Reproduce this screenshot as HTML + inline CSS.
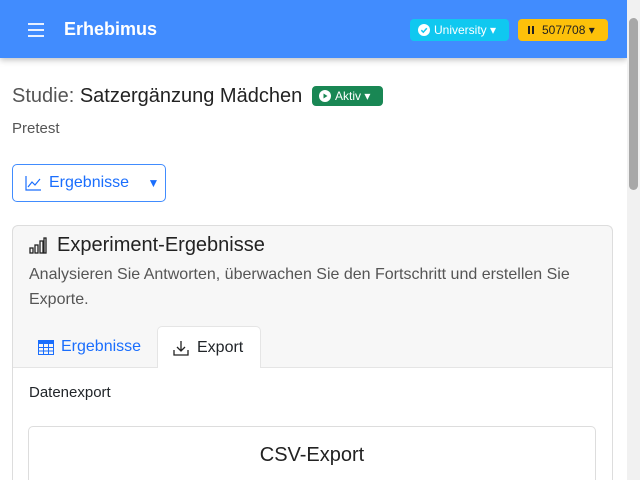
<!DOCTYPE html>
<html style="height:480px;overflow:hidden"><head><meta charset="utf-8"><style>
*{box-sizing:border-box;margin:0;padding:0}
body{width:640px;height:480px;overflow:hidden;font-family:"Liberation Sans",sans-serif;background:#fff;color:#212529;position:relative}
.nav{position:absolute;left:0;top:0;width:627px;height:58px;background:#418cfe;box-shadow:0 2px 6px rgba(0,0,0,.25)}
.brand{position:absolute;left:64px;top:19px;color:#fff;font-weight:bold;font-size:18px}
.ham{position:absolute;left:28px;top:23px;width:16px}
.ham i{display:block;height:2px;background:#e8f0ff;margin-bottom:4px}
.b1{position:absolute;left:410px;top:19px;width:99px;height:22px;background:#10c8f0;border-radius:4px;color:#fff;font-size:12px;line-height:22px;padding-left:24px}
.b2{position:absolute;left:518px;top:19px;width:90px;height:22px;background:#fdc10a;border-radius:4px;color:#222;font-size:12px;line-height:22px;padding-left:24px}
.sb{position:absolute;right:0;top:0;width:13px;height:480px;background:#f1f1f1}
.sb div{position:absolute;left:2px;top:18px;width:9px;height:172px;background:#a8a8a8;border-radius:5px}
h1{position:absolute;left:12px;top:85px;font-size:20px;font-weight:normal;color:#222}
h1 span{color:#555}
.akt{position:absolute;left:312px;top:86px;width:71px;height:20px;background:#198754;border-radius:4px;color:#fff;font-size:12px;line-height:20px;padding-left:23px}
.pre{position:absolute;left:12px;top:120px;font-size:15px;color:#555}
.btn{position:absolute;left:12px;top:164px;width:154px;height:38px;border:1px solid #418cfe;border-radius:5px;color:#1a6efd;font-size:16px;line-height:36px;padding-left:36px}
.card{position:absolute;left:12px;top:225px;width:601px;height:255px;border:1px solid #ddd;border-bottom:none;border-radius:6px 6px 0 0;background:#f7f7f7;overflow:hidden}
.ct{position:absolute;left:57px;top:234px;font-size:20px;color:#222}
.cd{position:absolute;left:29px;top:262px;width:575px;font-size:16px;line-height:25px;color:#555}
.body{position:absolute;left:13px;top:367px;width:599px;height:113px;background:#fff;border-top:1px solid #e5e5e5}
.tab1{position:absolute;left:38px;top:338px;color:#1a6efd;font-size:16px;padding-left:23px}
.tab2{position:absolute;left:157px;top:326px;width:104px;height:42px;background:#fff;border:1px solid #e5e5e5;border-bottom:none;border-radius:5px 5px 0 0;font-size:16px;line-height:42px;padding-left:39px}
.de{position:absolute;left:29px;top:384px;font-size:15px}
.csv{position:absolute;left:28px;top:426px;width:568px;height:54px;border:1px solid #ddd;border-bottom:none;border-radius:5px 5px 0 0;text-align:center;font-size:20px;padding-top:17px;color:#222}
</style></head><body>
<div class="nav">
<div class="ham"><i></i><i></i><i></i></div>
<div class="brand">Erhebimus</div>
<div class="b1"><svg style="position:absolute;left:8px;top:5px" width="12" height="12"><circle cx="6" cy="6" r="6" fill="#fff"/><path d="M3.3 6.2l2 2 3.5-4" stroke="#10c8f0" stroke-width="1.5" fill="none"/></svg>University ▾</div>
<div class="b2"><svg style="position:absolute;left:10px;top:7px" width="6" height="8"><rect x="0" y="0" width="2" height="8" fill="#222"/><rect x="4" y="0" width="2" height="8" fill="#222"/></svg>507/708 ▾</div>
</div>
<div class="sb"><div></div></div>
<h1><span>Studie:</span> Satzergänzung Mädchen</h1>
<div class="akt"><svg style="position:absolute;left:7px;top:4px" width="12" height="12"><circle cx="6" cy="6" r="6" fill="#fff"/><path d="M4.5 3.5v5l4-2.5z" fill="#198754"/></svg>Aktiv ▾</div>
<div class="pre">Pretest</div>
<div class="btn"><svg style="position:absolute;left:12px;top:11px" width="16" height="15"><path d="M1 0v14h15" stroke="#1a6efd" fill="none" stroke-width="1.2"/><path d="M3 11l4-5 3 3 5-6" stroke="#1a6efd" fill="none" stroke-width="1.2"/></svg>Ergebnisse <span style="margin-left:14px;font-size:12px">▼</span></div>
<div class="card"></div>
<svg style="position:absolute;left:29px;top:237px" width="18" height="18"><g fill="none" stroke="#222" stroke-width="1.3"><rect x="1" y="11" width="3" height="5"/><rect x="6" y="8" width="3" height="8"/><rect x="11" y="4" width="3" height="12"/><rect x="15" y="1" width="2" height="15"/></g></svg>
<div class="ct">Experiment-Ergebnisse</div>
<div class="cd">Analysieren Sie Antworten, überwachen Sie den Fortschritt und erstellen Sie Exporte.</div>
<div class="body"></div>
<div class="tab1"><svg style="position:absolute;left:0;top:2px" width="16" height="15"><rect x="0.5" y="0.5" width="15" height="14" fill="none" stroke="#1a6efd"/><rect x="0" y="0" width="16" height="4" fill="#1a6efd"/><path d="M5.5 0v15M10.5 0v15M0 7.5h16M0 11h16" stroke="#1a6efd"/></svg>Ergebnisse</div>
<div class="tab2"><svg style="position:absolute;left:15px;top:13px" width="16" height="16"><path d="M8 1v10M4 7l4 4 4-4M1 10v5h14v-5" stroke="#222" stroke-width="1.3" fill="none"/></svg>Export</div>
<div class="de">Datenexport</div>
<div class="csv">CSV-Export</div>
</body></html>
